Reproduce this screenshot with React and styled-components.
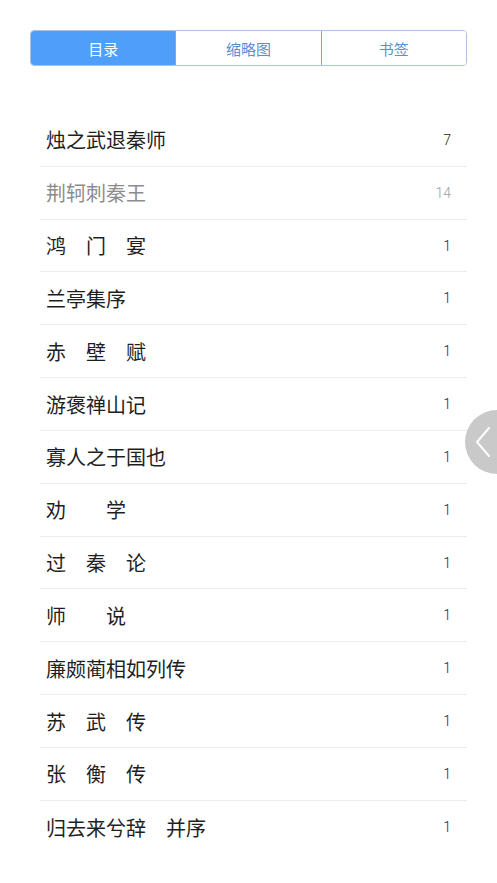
import React from "react";
import styled, { createGlobalStyle } from "styled-components";

const Global = createGlobalStyle`
  html, body { margin: 0; padding: 0; background: #ffffff; }
  body { font-family: "Noto Sans CJK SC", "Noto Sans", sans-serif; }
  * { box-sizing: border-box; }
`;

const Page = styled.div`
  position: relative;
  width: 497px;
  min-height: 883px;
  overflow: hidden;
  padding-top: 30px;
`;

const TabBar = styled.div`
  display: flex;
  margin: 0 30px;
  height: 36px;
  border: 1px solid #a9c4e2;
  border-radius: 4px;
  overflow: hidden;
`;

const Tab = styled.div`
  flex: 1;
  display: flex;
  align-items: center;
  justify-content: center;
  font-size: 15px;
  color: ${(p) => (p.$active ? "#ffffff" : "#5a8fd2")};
  background: ${(p) => (p.$active ? "#4f9ef9" : "#ffffff")};
  & + & {
    border-left: 1px solid #7ea9dc;
  }
`;

const List = styled.div`
  margin: 48px 30px 0 40px;
`;

const Row = styled.div`
  display: flex;
  align-items: center;
  justify-content: space-between;
  height: 52.83px;
  padding: 0 16px 0 6px;
  border-bottom: 1px solid #ececec;
  &:last-child {
    border-bottom: none;
  }
`;

const Title = styled.span`
  font-size: 20px;
  white-space: pre;
  color: ${(p) => (p.$muted ? "#8c8c8c" : "#1f1f1f")};
`;

const Count = styled.span`
  font-family: Roboto, "Liberation Sans", sans-serif;
  font-weight: 300;
  font-size: 14px;
  color: ${(p) => (p.$muted ? "#a0a0a0" : "#222222")};
`;

const SideButton = styled.div`
  position: absolute;
  top: 410px;
  left: 465px;
  width: 64px;
  height: 64px;
  border-radius: 50%;
  background: #c9c9c9;
  display: flex;
  align-items: center;
  padding-left: 10px;
`;

const items = [
  { t: "烛之武退秦师", n: 7 },
  { t: "荆轲刺秦王", n: 14, muted: true },
  { t: "鸿　门　宴", n: 1 },
  { t: "兰亭集序", n: 1 },
  { t: "赤　壁　赋", n: 1 },
  { t: "游褒禅山记", n: 1 },
  { t: "寡人之于国也", n: 1 },
  { t: "劝　　学", n: 1 },
  { t: "过　秦　论", n: 1 },
  { t: "师　　说", n: 1 },
  { t: "廉颇蔺相如列传", n: 1 },
  { t: "苏　武　传", n: 1 },
  { t: "张　衡　传", n: 1 },
  { t: "归去来兮辞　并序", n: 1 },
];

export default function App() {
  return (
    <Page>
      <Global />
      <TabBar>
        <Tab $active>目录</Tab>
        <Tab>缩略图</Tab>
        <Tab>书签</Tab>
      </TabBar>
      <List>
        {items.map((it) => (
          <Row key={it.t}>
            <Title $muted={it.muted}>{it.t}</Title>
            <Count $muted={it.muted}>{it.n}</Count>
          </Row>
        ))}
      </List>
      <SideButton>
        <svg width="16" height="30" viewBox="0 0 16 30">
          <polyline
            points="14,1 2,15 14,29"
            fill="none"
            stroke="#ffffff"
            strokeWidth="2"
            strokeLinecap="round"
            strokeLinejoin="round"
          />
        </svg>
      </SideButton>
    </Page>
  );
}
